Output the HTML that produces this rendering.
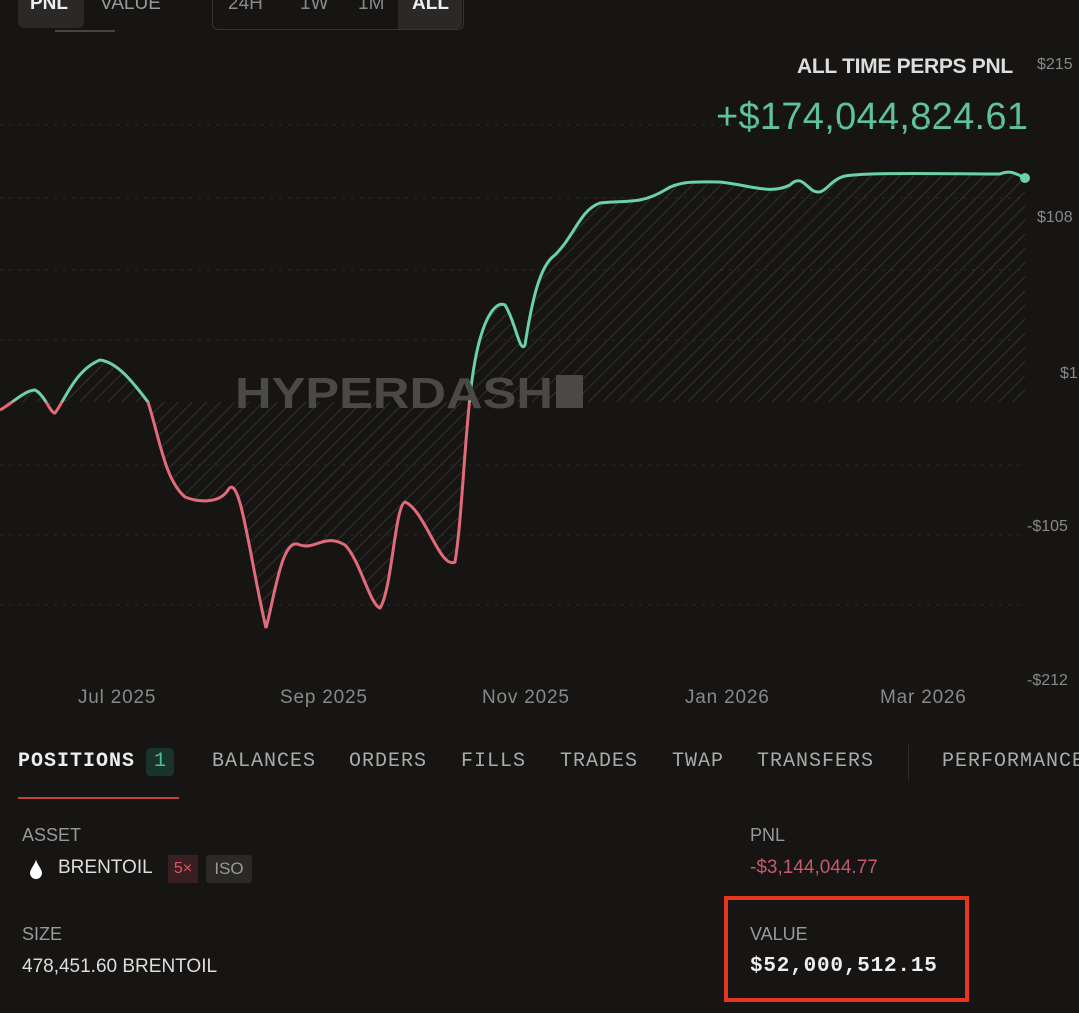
<!DOCTYPE html>
<html><head><meta charset="utf-8"><style>
html,body{margin:0;padding:0;background:#161513;width:1079px;height:1013px;overflow:hidden;font-family:"Liberation Sans",sans-serif;}
.abs{position:absolute;white-space:nowrap;}
.mono{font-family:"Liberation Mono",monospace;}
.tab{top:750px;color:#aaa;font-size:20px;letter-spacing:1px;}
</style></head><body>
<div class="abs" style="left:18px;top:-12px;width:66px;height:40px;background:#2a2927;border-radius:6px;"></div>
<div class="abs" style="left:30px;top:-7px;color:#eee;font-size:19px;font-weight:bold;">PNL</div>
<div class="abs" style="left:100px;top:-7px;color:#999;font-size:19px;">VALUE</div>
<div class="abs" style="left:55px;top:30px;width:60px;height:2px;background:#444;"></div>
<div class="abs" style="left:212px;top:-12px;width:250px;height:40px;border:1px solid #333;border-radius:6px;"></div>
<div class="abs" style="left:398px;top:-12px;width:64px;height:41px;background:#2a2927;border-radius:0 6px 6px 0;"></div>
<div class="abs" style="left:228px;top:-7px;color:#888;font-size:19px;">24H</div>
<div class="abs" style="left:300px;top:-7px;color:#888;font-size:19px;">1W</div>
<div class="abs" style="left:358px;top:-7px;color:#888;font-size:19px;">1M</div>
<div class="abs" style="left:412px;top:-7px;color:#eee;font-size:19px;font-weight:bold;">ALL</div>

<div class="abs" style="left:797px;top:55px;color:#ddd;font-size:21px;font-weight:bold;letter-spacing:-0.3px;">ALL TIME PERPS PNL</div>
<div class="abs" style="left:716px;top:96px;color:#5fc39a;font-size:38px;letter-spacing:0.3px;">+$174,044,824.61</div>
<div class="abs" style="left:1037px;top:56px;color:#888;font-size:16px;">$215</div>
<div class="abs" style="left:1037px;top:209px;color:#888;font-size:16px;">$108</div>
<div class="abs" style="left:1060px;top:365px;color:#888;font-size:16px;">$1</div>
<div class="abs" style="left:1027px;top:518px;color:#888;font-size:16px;">-$105</div>
<div class="abs" style="left:1027px;top:672px;color:#888;font-size:16px;">-$212</div>

<svg class="abs" style="left:0;top:0" width="1079" height="720">
<defs>
<pattern id="h" width="10" height="10" patternUnits="userSpaceOnUse" patternTransform="rotate(45)"><line x1="0" y1="0" x2="0" y2="10" stroke="#3a3a36" stroke-width="1.5"/></pattern>
<clipPath id="up"><rect x="0" y="0" width="1079" height="402"/></clipPath>
<clipPath id="dn"><rect x="0" y="402" width="1079" height="400"/></clipPath>
</defs>
<g stroke="#2a2926" stroke-dasharray="3 6">
<line x1="0" y1="125" x2="1025" y2="125"/><line x1="0" y1="198" x2="1025" y2="198"/><line x1="0" y1="270" x2="1025" y2="270"/><line x1="0" y1="340" x2="1025" y2="340"/><line x1="0" y1="465" x2="1025" y2="465"/><line x1="0" y1="535" x2="1025" y2="535"/><line x1="0" y1="605" x2="1025" y2="605"/>
</g>
<path fill="url(#h)" d="M0,402 L0,410 C10,405 25,390 35,390 C45,395 50,413 55,413 C65,400 75,370 100,360 C118,362 135,385 148,402 C160,440 165,480 185,497 C200,503 220,503 228,490 C240,470 250,560 266,628 C275,595 282,535 300,545 C315,550 325,533 345,545 C360,560 370,605 380,608 C392,590 395,505 405,502 C425,510 440,570 455,562 C462,520 465,430 472,380 C480,320 495,300 505,305 C515,320 520,355 525,345 C532,300 540,265 555,255 C575,235 580,210 600,203 C625,200 640,205 665,190 C680,180 700,182 720,182 C750,185 770,195 790,185 C800,175 805,185 812,190 C825,198 828,180 845,176 C870,172 950,174 1000,174 C1010,170 1015,173 1025,178 L1025,402 Z"/>
<g fill="none" stroke-width="3">
<path clip-path="url(#up)" stroke="#6bd1a6" d="M0,410 C10,405 25,390 35,390 C45,395 50,413 55,413 C65,400 75,370 100,360 C118,362 135,385 148,402 C160,440 165,480 185,497 C200,503 220,503 228,490 C240,470 250,560 266,628 C275,595 282,535 300,545 C315,550 325,533 345,545 C360,560 370,605 380,608 C392,590 395,505 405,502 C425,510 440,570 455,562 C462,520 465,430 472,380 C480,320 495,300 505,305 C515,320 520,355 525,345 C532,300 540,265 555,255 C575,235 580,210 600,203 C625,200 640,205 665,190 C680,180 700,182 720,182 C750,185 770,195 790,185 C800,175 805,185 812,190 C825,198 828,180 845,176 C870,172 950,174 1000,174 C1010,170 1015,173 1025,178"/>
<path clip-path="url(#dn)" stroke="#e06b79" d="M0,410 C10,405 25,390 35,390 C45,395 50,413 55,413 C65,400 75,370 100,360 C118,362 135,385 148,402 C160,440 165,480 185,497 C200,503 220,503 228,490 C240,470 250,560 266,628 C275,595 282,535 300,545 C315,550 325,533 345,545 C360,560 370,605 380,608 C392,590 395,505 405,502 C425,510 440,570 455,562 C462,520 465,430 472,380 C480,320 495,300 505,305"/>
</g>
<circle cx="1025" cy="178" r="5" fill="#6bd1a6"/>
<text x="235" y="408" font-family="Liberation Sans, sans-serif" font-size="44" font-weight="bold" fill="#4a4946" textLength="318" lengthAdjust="spacingAndGlyphs">HYPERDASH</text>
<rect x="556" y="375" width="27" height="33" fill="#4a4946"/>
<g font-family="Liberation Sans, sans-serif" font-size="19" fill="#888" letter-spacing="0.8">
<text x="78" y="703">Jul 2025</text><text x="280" y="703">Sep 2025</text><text x="482" y="703">Nov 2025</text><text x="685" y="703">Jan 2026</text><text x="880" y="703">Mar 2026</text>
</g>
</svg>

<div class="abs mono" style="left:18px;top:750px;color:#eee;font-size:20px;font-weight:bold;letter-spacing:1px;">POSITIONS</div>
<div class="abs mono" style="left:146px;top:748px;width:28px;height:28px;background:#17332a;border-radius:4px;color:#4fbf8e;font-size:20px;text-align:center;line-height:28px;">1</div>
<div class="abs" style="left:18px;top:797px;width:161px;height:2px;background:#c0443f;"></div>
<div class="abs mono tab" style="left:212px;">BALANCES</div>
<div class="abs mono tab" style="left:349px;">ORDERS</div>
<div class="abs mono tab" style="left:461px;">FILLS</div>
<div class="abs mono tab" style="left:560px;">TRADES</div>
<div class="abs mono tab" style="left:672px;">TWAP</div>
<div class="abs mono tab" style="left:757px;">TRANSFERS</div>
<div class="abs" style="left:908px;top:745px;width:1px;height:36px;background:#2e2d2a;"></div>
<div class="abs mono tab" style="left:942px;">PERFORMANCE</div>

<div class="abs" style="left:22px;top:825px;color:#999;font-size:18px;">ASSET</div>
<svg class="abs" style="left:28px;top:858px" width="16" height="22"><path d="M8,1 C8,5 2,11 2,15 A6,6 0 0 0 14,15 C14,11 8,5 8,1Z" fill="#fff"/></svg>
<div class="abs" style="left:58px;top:857px;color:#ddd;font-size:19px;">BRENTOIL</div>
<div class="abs" style="left:168px;top:855px;width:30px;height:28px;background:#3a1f22;color:#d9556a;font-size:16px;line-height:28px;text-align:center;">5×</div>
<div class="abs" style="left:206px;top:855px;width:46px;height:28px;background:#2a2927;border-radius:3px;color:#999;font-size:17px;line-height:28px;text-align:center;">ISO</div>
<div class="abs" style="left:22px;top:924px;color:#999;font-size:18px;">SIZE</div>
<div class="abs" style="left:22px;top:956px;color:#ddd;font-size:19px;">478,451.60 BRENTOIL</div>

<div class="abs" style="left:750px;top:825px;color:#999;font-size:18px;">PNL</div>
<div class="abs" style="left:750px;top:857px;color:#c45a6a;font-size:19px;">-$3,144,044.77</div>
<div class="abs" style="left:724px;top:896px;width:237px;height:98px;border:4px solid #e8361e;"></div>
<div class="abs" style="left:750px;top:924px;color:#999;font-size:18px;">VALUE</div>
<div class="abs mono" style="left:750px;top:955px;color:#eee;font-size:21px;font-weight:bold;letter-spacing:0.8px;">$52,000,512.15</div>
</body></html>
